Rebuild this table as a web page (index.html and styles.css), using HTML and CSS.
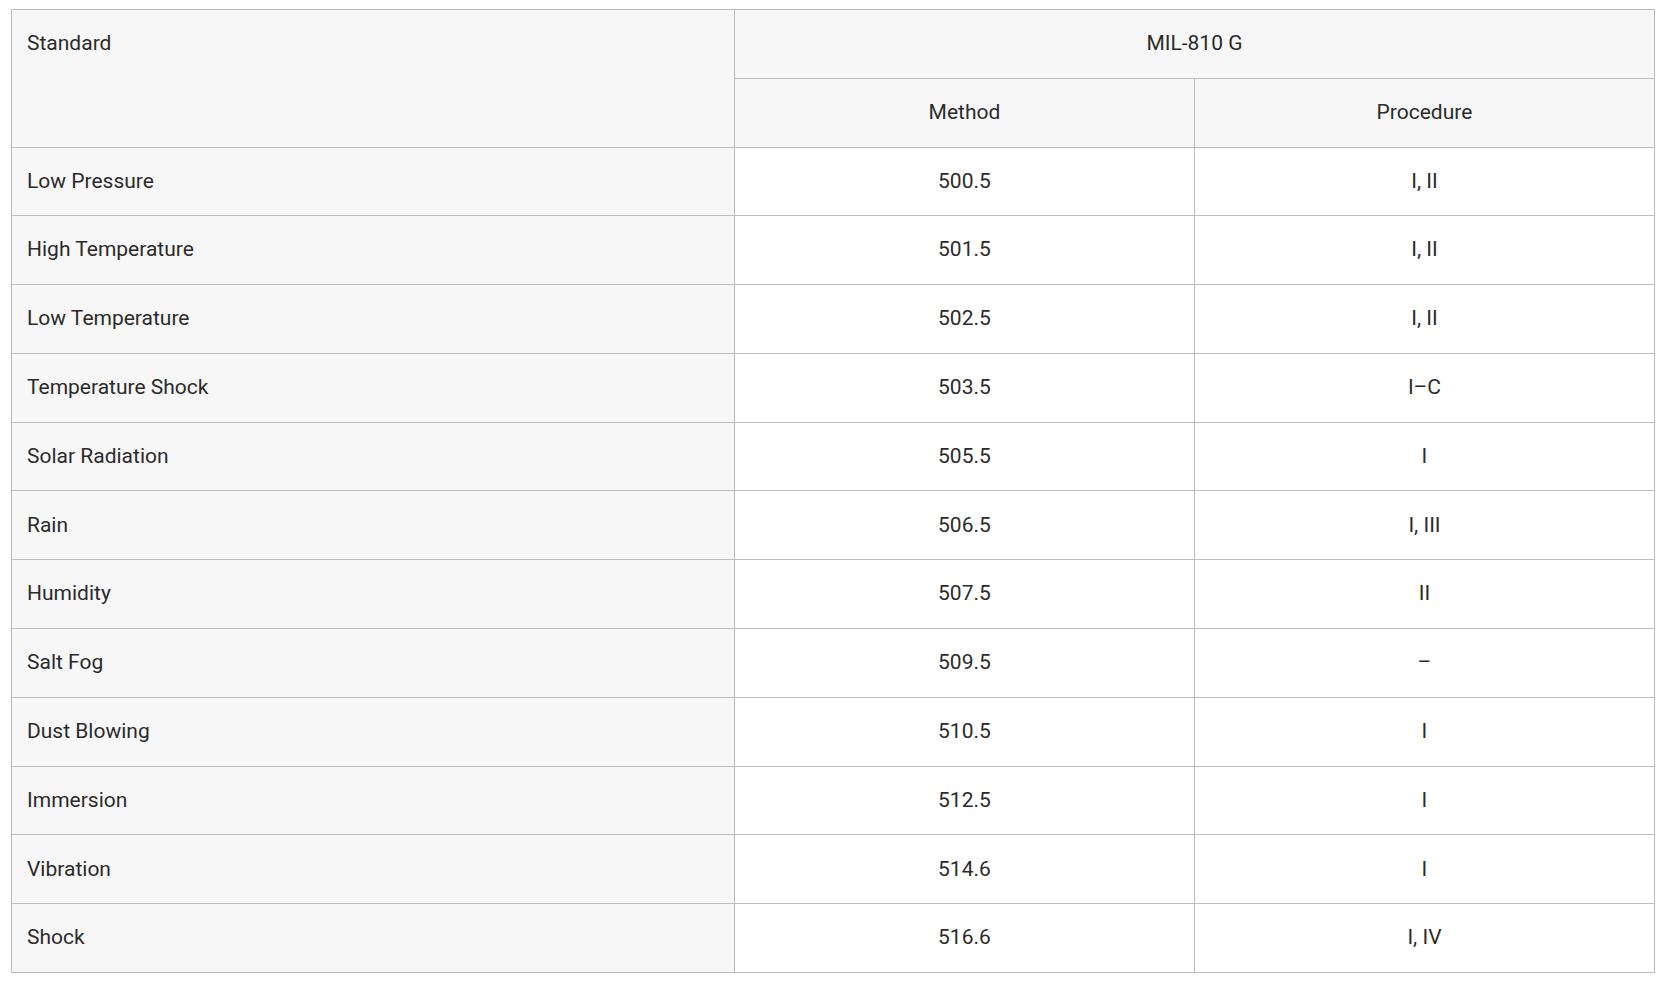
FILE: index.html
```html
<!DOCTYPE html>
<html lang="en">
<head>
<meta charset="utf-8">
<title>MIL-810 G</title>
<link rel="stylesheet" href="styles.css">
</head>
<body>
<div class="wrap">
<table class="spec">
<colgroup>
<col class="c-name">
<col class="c-val">
<col class="c-val">
</colgroup>
<thead>
<tr>
<th class="std" rowspan="2">Standard</th>
<th colspan="2">MIL-810 G</th>
</tr>
<tr>
<th>Method</th>
<th>Procedure</th>
</tr>
</thead>
<tbody>
<tr><th>Low Pressure</th><td>500.5</td><td>I, II</td></tr>
<tr><th>High Temperature</th><td>501.5</td><td>I, II</td></tr>
<tr><th>Low Temperature</th><td>502.5</td><td>I, II</td></tr>
<tr><th>Temperature Shock</th><td>503.5</td><td>I–C</td></tr>
<tr><th>Solar Radiation</th><td>505.5</td><td>I</td></tr>
<tr><th>Rain</th><td>506.5</td><td>I, III</td></tr>
<tr><th>Humidity</th><td>507.5</td><td>II</td></tr>
<tr><th>Salt Fog</th><td>509.5</td><td>–</td></tr>
<tr><th>Dust Blowing</th><td>510.5</td><td>I</td></tr>
<tr><th>Immersion</th><td>512.5</td><td>I</td></tr>
<tr><th>Vibration</th><td>514.6</td><td>I</td></tr>
<tr><th>Shock</th><td>516.6</td><td>I, IV</td></tr>
</tbody>
</table>
</div>
</body>
</html>
```

FILE: styles.css
```css
html, body {
  margin: 0;
  padding: 0;
  background: #ffffff;
}

.wrap {
  padding: 9px 13px 0 11px;
}

.spec {
  width: 100%;
  border-collapse: collapse;
  table-layout: fixed;
  font-family: Roboto, "Liberation Sans", Arial, sans-serif;
  font-size: 21px;
  line-height: 31.5px;
  color: #2b2b2b;
  border: 1px solid #bdbdbd;
}

.c-name {
  width: 44%;
}

.c-val {
  width: 28%;
}

.spec th,
.spec td {
  border: 1px solid #bdbdbd;
  padding: 18.15px 15px;
  font-weight: 400;
  text-align: center;
  vertical-align: middle;
}

.spec thead th {
  background: #f7f7f7;
}

.spec tbody th {
  background: #f7f7f7;
  text-align: left;
}

.spec tbody td {
  background: #ffffff;
}

.spec thead th.std {
  text-align: left;
  vertical-align: top;
  padding-top: 18px;
}
```
